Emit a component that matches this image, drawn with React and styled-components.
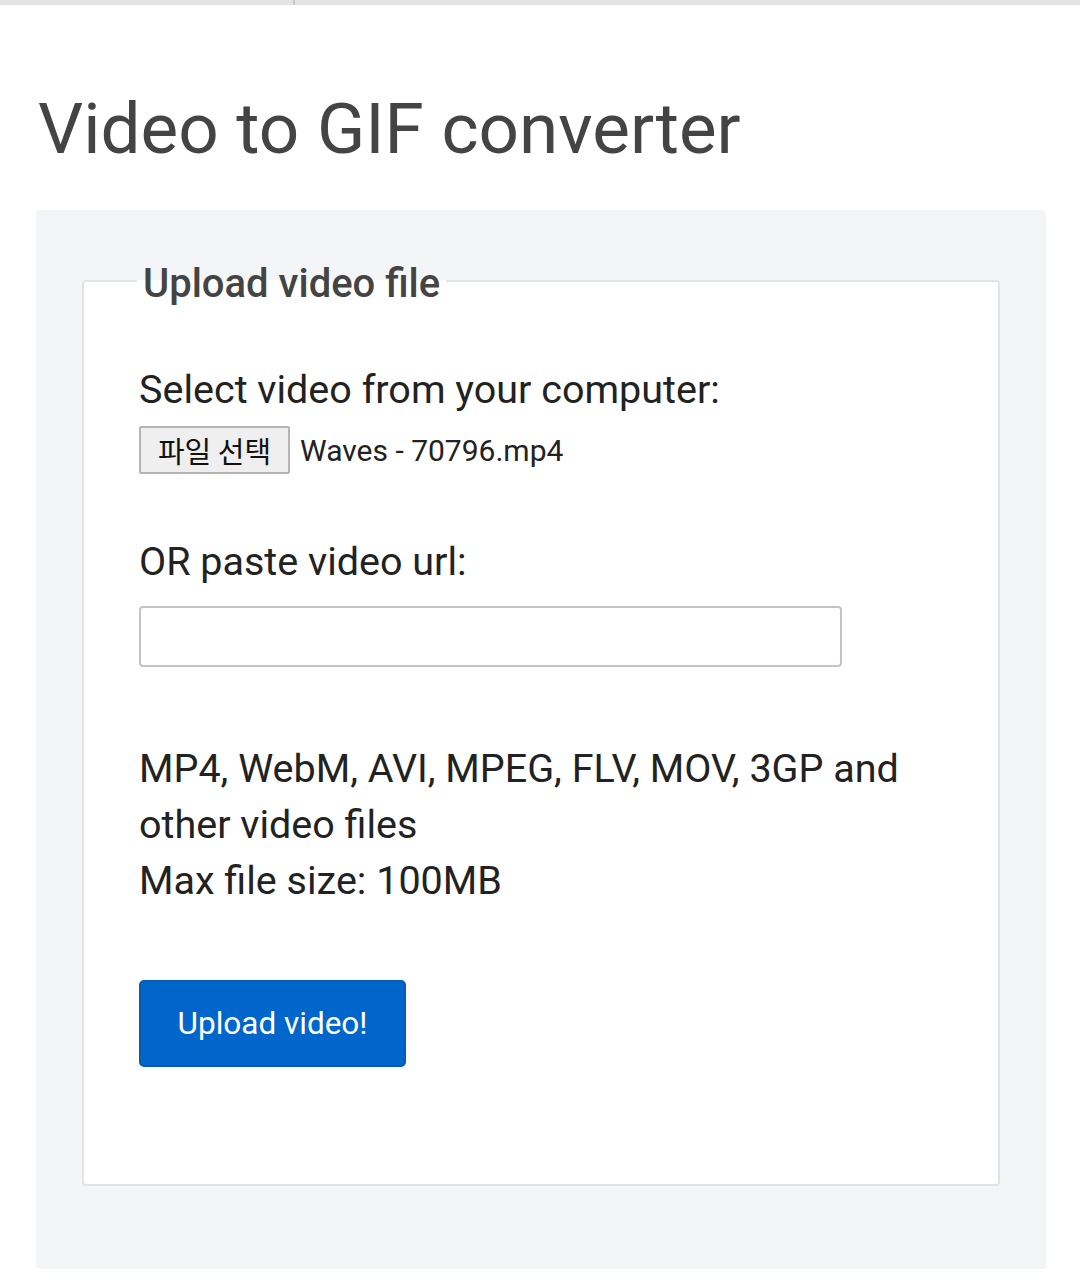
import styled, { createGlobalStyle } from 'styled-components';

const GlobalStyle = createGlobalStyle`
  html, body {
    margin: 0;
    padding: 0;
    background: #ffffff;
    font-family: Roboto, "Noto Sans", "Noto Sans CJK KR", sans-serif;
  }
`;

const TopBar = styled.div`
  display: flex;
  height: 5px;
  background: #e4e4e4;
`;

const TopBarSegment = styled.div`
  width: ${({ $width }) => $width};
  flex: ${({ $grow }) => ($grow ? 1 : 'none')};
  border-right: ${({ $divider }) => ($divider ? '2px solid #c8c8c8' : 'none')};
`;

const Page = styled.main`
  padding: 0 34px 0 36px;
`;

const Title = styled.h1`
  margin: 0;
  padding: 82px 0 39px 2px;
  font-size: 71px;
  line-height: 84px;
  font-weight: 400;
  color: #444444;
`;

const Panel = styled.section`
  background: #f4f5f7;
  border-radius: 4px;
  padding: 45px 46px 83px;
`;

const Fieldset = styled.fieldset`
  margin: 0;
  min-width: 0;
  background: #ffffff;
  border: 2px solid #e2e3e5;
  border-radius: 4px;
  padding: 60px 55px 117px;
`;

const Legend = styled.legend`
  margin-left: -2px;
  padding: 6px 6px 0;
  font-size: 40px;
  line-height: 46px;
  font-weight: 500;
  color: #444444;
`;

const Label = styled.p`
  margin: 0;
  font-size: 39.5px;
  line-height: 46px;
  color: #222222;
`;

const FileRow = styled.div`
  display: flex;
  align-items: center;
  gap: 10px;
  margin: 13px 0 65px;
`;

const FileButton = styled.button`
  width: 151px;
  height: 48px;
  padding: 0;
  background: #efefef;
  border: 2px solid #b5b5b5;
  border-radius: 2px;
  font-family: "Noto Sans CJK KR", Roboto, sans-serif;
  font-size: 29px;
  color: #111111;
`;

const FileName = styled.span`
  font-size: 30px;
  color: #222222;
`;

const UrlInput = styled.input`
  display: block;
  box-sizing: border-box;
  width: 703px;
  height: 61px;
  margin: 21px 0 74px;
  border: 2px solid #c4c4c4;
  border-radius: 4px;
  background: #ffffff;
`;

const Info = styled.p`
  margin: 0 0 71px;
  font-size: 39.5px;
  line-height: 56px;
  color: #222222;
`;

const UploadButton = styled.button`
  display: block;
  width: 267px;
  height: 87px;
  padding: 0;
  background: #0066cc;
  border: 2px solid #0a5bb0;
  border-radius: 5px;
  font-family: Roboto, sans-serif;
  font-size: 31.5px;
  color: #ffffff;
`;

export default function App() {
  return (
    <>
      <GlobalStyle />
      <TopBar>
        <TopBarSegment $width="293px" $divider />
        <TopBarSegment $grow />
      </TopBar>
      <Page>
        <Title>Video to GIF converter</Title>
        <Panel>
          <Fieldset>
            <Legend>Upload video file</Legend>
            <Label>Select video from your computer:</Label>
            <FileRow>
              <FileButton type="button">파일 선택</FileButton>
              <FileName>Waves - 70796.mp4</FileName>
            </FileRow>
            <Label>OR paste video url:</Label>
            <UrlInput type="text" />
            <Info>
              MP4, WebM, AVI, MPEG, FLV, MOV, 3GP and
              <br />
              other video files
              <br />
              Max file size: 100MB
            </Info>
            <UploadButton type="button">Upload video!</UploadButton>
          </Fieldset>
        </Panel>
      </Page>
    </>
  );
}
